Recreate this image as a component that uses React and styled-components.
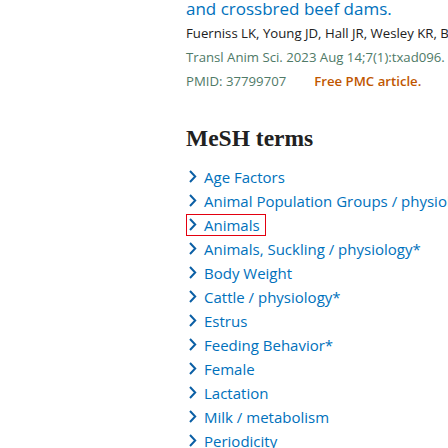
import React from "react";
import styled, { createGlobalStyle } from "styled-components";

const Global = createGlobalStyle`
  html, body { margin: 0; padding: 0; background: #ffffff; }
  body { overflow: hidden; width: 448px; height: 448px; }
`;

const Page = styled.div`
  display: grid;
  grid-template-columns: 186px 1fr;
  width: 448px;
  height: 448px;
  overflow: hidden;
  font-family: "Open Sans", "Noto Sans", sans-serif;
`;

const Aside = styled.aside``;

const Main = styled.main`
  min-width: 0;
  white-space: nowrap;
`;

const TitleLine = styled.a`
  display: block;
  font-size: 17px;
  line-height: 17px;
  color: #0071bc;
  text-decoration: none;
`;

const Citation = styled.div`
  margin-top: 4px;
  font-size: 13.2px;
  line-height: 24px;
`;

const CiteLine = styled.div`
  color: ${(p) => p.$color || "#212121"};
  display: flex;
  gap: ${(p) => p.$gap || 0}px;
`;

const FreeLabel = styled.span`
  color: #c05600;
  font-weight: 600;
`;

const Heading = styled.h2`
  margin: 32px 0 0;
  font-family: "Liberation Serif", "Times New Roman", serif;
  font-weight: 700;
  font-size: 23.5px;
  line-height: 27.6px;
  color: #212121;
`;

const TermList = styled.ul`
  list-style: none;
  margin: 13.5px 0 0;
  padding: 0;
  display: flex;
  flex-direction: column;
  gap: 2px;
`;

const TermItem = styled.li`
  height: 22px;
`;

const TermButton = styled.button`
  display: inline-flex;
  align-items: center;
  gap: 7px;
  height: 22px;
  box-sizing: border-box;
  margin: 0;
  padding: 0 5px 0 1px;
  border: 1px solid ${(p) => (p.$highlighted ? "#e3000f" : "transparent")};
  background: none;
  font-family: "Open Sans", "Noto Sans", sans-serif;
  font-size: 15px;
  line-height: 22px;
  color: #0071bc;
  cursor: pointer;
  white-space: nowrap;
`;

const Chevron = styled.svg`
  flex: none;
  width: 9px;
  height: 13px;
  margin-top: -1px;
`;

const terms = [
  "Age Factors",
  "Animal Population Groups / physiology*",
  "Animals",
  "Animals, Suckling / physiology*",
  "Body Weight",
  "Cattle / physiology*",
  "Estrus",
  "Feeding Behavior*",
  "Female",
  "Lactation",
  "Milk / metabolism",
  "Periodicity",
];

export default function App() {
  return (
    <>
      <Global />
      <Page>
        <Aside />
        <Main>
          <TitleLine href="#">and crossbred beef dams.</TitleLine>
          <Citation>
            <CiteLine>
              Fuerniss LK, Young JD, Hall JR, Wesley KR, Bryant TC, Johnson BJ.
            </CiteLine>
            <CiteLine $color="#4f7a67">
              Transl Anim Sci. 2023 Aug 14;7(1):txad096. doi: 10.1093/tas/txad096.
            </CiteLine>
            <CiteLine $color="#4f7a67" $gap={28}>
              <span>PMID: 37799707</span>
              <FreeLabel>Free PMC article.</FreeLabel>
            </CiteLine>
          </Citation>
          <Heading>MeSH terms</Heading>
          <TermList>
            {terms.map((t) => (
              <TermItem key={t}>
                <TermButton $highlighted={t === "Animals"}>
                  <Chevron viewBox="0 0 9 13" aria-hidden="true">
                    <path
                      d="M2 1 L7.2 6.5 L2 12"
                      fill="none"
                      stroke="#0b5fa5"
                      strokeWidth="2"
                    />
                  </Chevron>
                  {t}
                </TermButton>
              </TermItem>
            ))}
          </TermList>
        </Main>
      </Page>
    </>
  );
}
